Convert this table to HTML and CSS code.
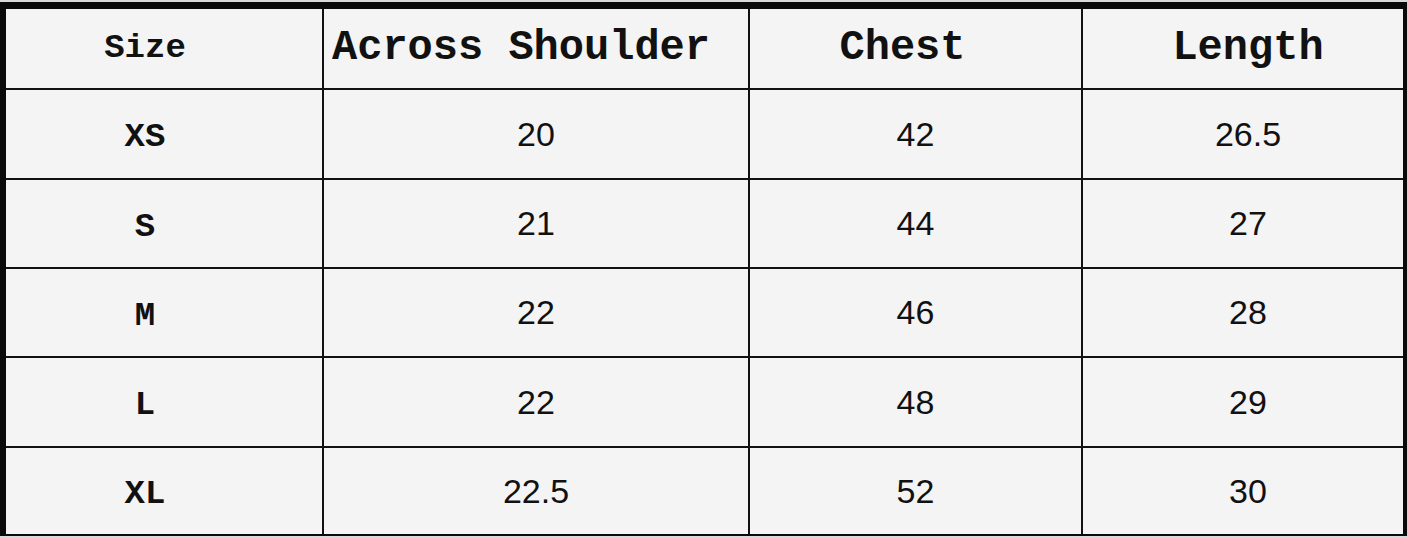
FILE: index.html
```html
<!DOCTYPE html>
<html>
<head>
<meta charset="utf-8">
<link rel="stylesheet" href="styles.css">
</head>
<body>
<div class="frame">
  <div class="grid">
    <div class="cell head small c1">Size</div>
    <div class="cell head c2h">Across Shoulder</div>
    <div class="cell head c3h">Chest</div>
    <div class="cell head c4">Length</div>

    <div class="cell size c1">XS</div>
    <div class="cell num">20</div>
    <div class="cell num">42</div>
    <div class="cell num c4">26.5</div>

    <div class="cell size c1">S</div>
    <div class="cell num">21</div>
    <div class="cell num">44</div>
    <div class="cell num c4">27</div>

    <div class="cell size c1">M</div>
    <div class="cell num">22</div>
    <div class="cell num">46</div>
    <div class="cell num c4">28</div>

    <div class="cell size c1">L</div>
    <div class="cell num">22</div>
    <div class="cell num">48</div>
    <div class="cell num c4">29</div>

    <div class="cell size c1">XL</div>
    <div class="cell num">22.5</div>
    <div class="cell num">52</div>
    <div class="cell num c4">30</div>
  </div>
</div>
</body>
</html>
```

FILE: styles.css
```css
html, body {
  margin: 0;
  padding: 0;
  background: #d9d9dc;
}
body {
  width: 1407px;
  height: 538px;
  overflow: hidden;
}
.frame {
  margin-top: 2px;
  background: #0a0a0a;
  padding: 7px 4px 2px 6px;
}
.grid {
  display: grid;
  grid-template-columns: 316px 424px 331px 320px;
  grid-template-rows: 79px 88px 87px 87px 88px 86px;
  gap: 2px;
  background: #111;
}
.cell {
  background: #f4f4f4;
  display: flex;
  align-items: center;
  justify-content: center;
  color: #111;
  box-sizing: border-box;
}
.head {
  font-family: "Liberation Mono", "Courier New", monospace;
  font-weight: bold;
  font-size: 42px;
  padding-bottom: 2px;
}
.head.small {
  font-size: 34px;
}
.size {
  font-family: "Liberation Mono", "Courier New", monospace;
  font-weight: bold;
  font-size: 34px;
  padding-top: 6px;
}
.num {
  font-family: "Liberation Sans", Arial, sans-serif;
  font-size: 34px;
}
.c1 {
  padding-right: 38px;
}
.c2h {
  padding-right: 30px;
}
.c3h {
  padding-right: 26px;
}
.c4 {
  padding-left: 10px;
}
```
